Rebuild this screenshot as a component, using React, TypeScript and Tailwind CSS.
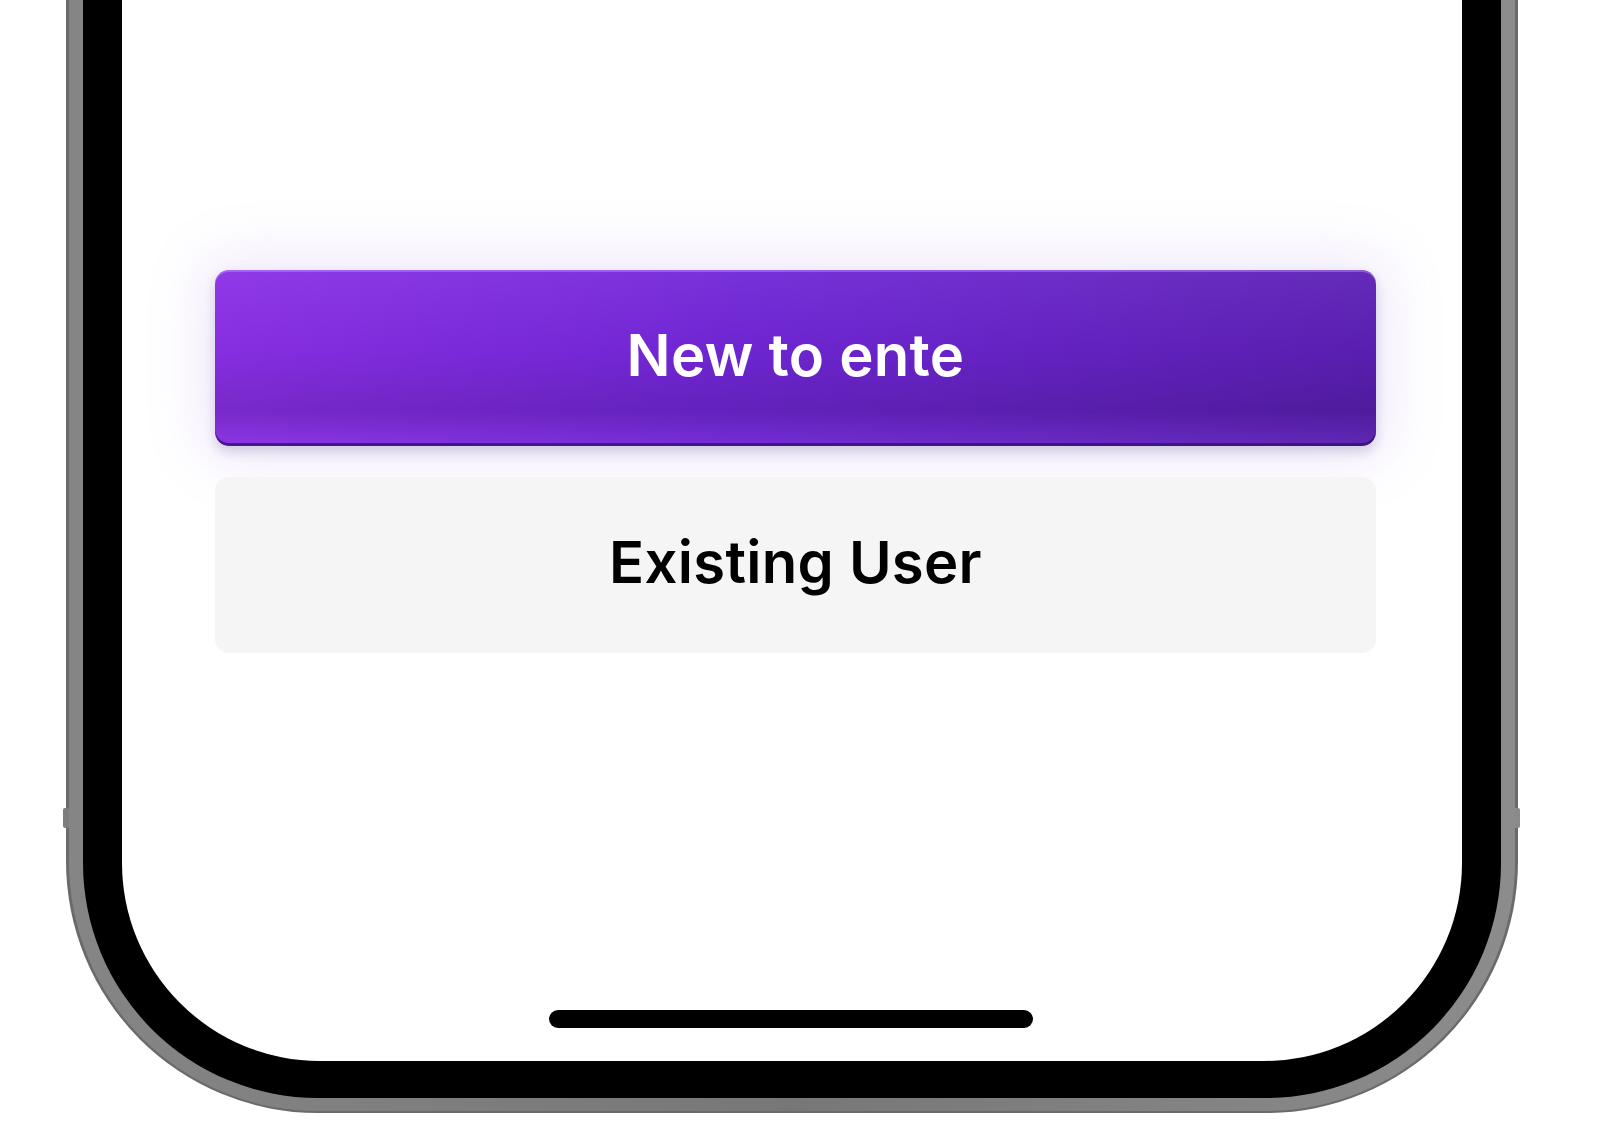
const font = "font-['Inter','Liberation_Sans',sans-serif]";

function HomeIndicator() {
  return <div className="h-[18px] w-[484px] rounded-full bg-black" />;
}

export default function App() {
  return (
    <div className={`relative h-[1128px] w-[1600px] overflow-hidden bg-white ${font}`}>
      {/* side buttons peeking out of the frame */}
      <div className="absolute left-[63px] top-[808px] h-[20px] w-[6px] rounded-l-[2px] bg-[#7d7d7d]" />
      <div className="absolute left-[1515px] top-[808px] h-[20px] w-[5px] rounded-r-[2px] bg-[#8a8a8a]" />

      {/* phone body: outer rim -> inner rim -> bezel -> screen */}
      <div className="ml-[66px] flex h-[1113px] w-[1452px] flex-col rounded-b-[252px] bg-[#6a6a6a] px-[3px] pb-[2px]">
        <div className="flex flex-1 flex-col rounded-b-[249px] bg-[linear-gradient(90deg,#858585_0%,#777777_50%,#8c8c8c_100%)] px-[14px] pb-[13px]">
          <div className="flex flex-1 flex-col rounded-b-[235px] bg-black px-[39px] pb-[37px]">
            <main className="flex flex-1 flex-col rounded-b-[198px] bg-white pl-[93px] pr-[86px] pt-[270px]">
              <div className="flex flex-col gap-[31px]">
                <button
                  type="button"
                  className="flex h-[176px] items-center justify-center rounded-[14px] bg-[linear-gradient(180deg,rgba(255,255,255,0.05)_0%,rgba(0,0,0,0.02)_45%,rgba(0,0,0,0.12)_80%,rgba(255,255,255,0.04)_100%),linear-gradient(100deg,#8a2fe6_0%,#7026d6_45%,#5a1fb2_100%)] pb-[6px] text-[58px] font-semibold tracking-[0.005em] text-white shadow-[inset_0_2px_0_rgba(190,150,255,0.45),inset_0_-3px_0_rgba(45,15,110,0.75),0_0_60px_14px_rgba(150,100,235,0.14),0_6px_12px_rgba(40,20,90,0.18)]"
                >
                  New to ente
                </button>
                <button
                  type="button"
                  className="flex h-[176px] items-center justify-center rounded-[14px] bg-[#f5f5f5] pb-[6px] text-[58px] font-semibold tracking-[0.005em] text-black"
                >
                  Existing User
                </button>
              </div>
              <div className="mt-auto flex justify-center pb-[33px] pr-[9px]">
                <HomeIndicator />
              </div>
            </main>
          </div>
        </div>
      </div>
    </div>
  );
}
